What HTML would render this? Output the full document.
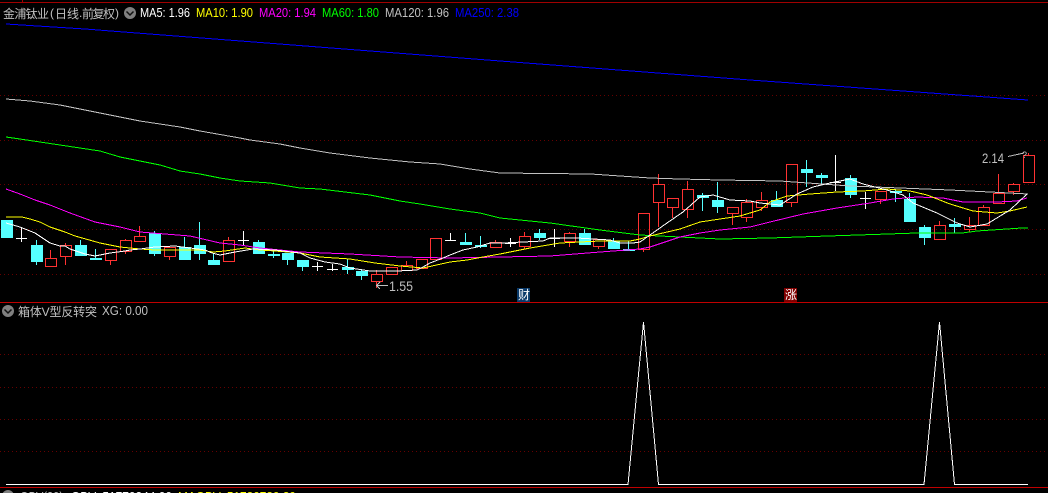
<!DOCTYPE html>
<html><head><meta charset="utf-8"><style>
html,body{margin:0;padding:0;background:#000;width:1048px;height:493px;overflow:hidden}
svg{display:block;position:absolute;left:0;top:0}
text{font-family:"Liberation Sans","Noto Sans CJK SC",sans-serif;font-size:13px}
.c{font-size:12px}
</style></head><body>
<svg width="1048" height="493" viewBox="0 0 1048 493">
<g shape-rendering="crispEdges" fill="none">
<path d="M0 2.500H1048M22.500 0V3" stroke="#a00000"/>
<path d="M0 95.500H1048M0 140.500H1048M0 184.500H1048M0 229.500H1048M0 274.500H1048M0 354.500H1048M0 387.500H1048M0 419.500H1048M0 451.500H1048" stroke="#660000" stroke-dasharray="1 3"/>
<path d="M0 302.500H1048M0 487.500H1048" stroke="#c00000"/>
<path fill="#55ffff" stroke="none" d="M1 220h12v18h-12zM31 245h12v17h-12zM75 245h12v11h-12zM90 258h12v2h-12zM149 233h12v21h-12zM179 247h12v13h-12zM194 245h12v9h-12zM208 260h12v5h-12zM253 242h12v12h-12zM268 254h12v2h-12zM282 253h12v7h-12zM297 260h12v7h-12zM342 267h12v3h-12zM356 271h12v5h-12zM460 242h12v3h-12zM475 245h12v2h-12zM534 233h12v5h-12zM579 233h12v12h-12zM608 241h12v8h-12zM623 249h12v2h-12zM697 195h12v3h-12zM712 200h12v7h-12zM771 200h12v7h-12zM801 169h12v4h-12zM816 175h12v3h-12zM845 178h12v17h-12zM890 191h12v2h-12zM904 199h12v23h-12zM919 227h12v11h-12zM949 224h12v3h-12z"/>
<path stroke="#55ffff" d="M36.500 240V265M80.500 240V245M95.500 249V260M154.500 231V256M184.500 237V247M199.500 222V260M213.500 254V260M258.500 240V254M273.500 250V258M287.500 253V265M302.500 260V271M347.500 259V274M361.500 269V280M465.500 233V245M480.500 236V248M539.500 229V240M584.500 229V245M613.500 238V249M628.500 241V251M702.500 193V211M717.500 182V213M776.500 191V207M806.500 160V187M821.500 173V185M850.500 175V198M895.500 189V202M909.500 193V222M924.500 225V245M954.500 218V233"/>
<path stroke="#ff3232" d="M45.500 258.500h11v8h-11zM50.500 250V258M60.500 245.500h11v11h-11zM65.500 243V245M65.500 257V265M105.500 249.500h11v11h-11zM110.500 261V265M120.500 240.500h11v11h-11zM125.500 239V240M125.500 252V254M134.500 236.500h11v5h-11zM139.500 226V236M164.500 247.500h11v9h-11zM169.500 257V260M223.500 240.500h11v21h-11zM228.500 237V240M371.500 274.500h11v7h-11zM376.500 270V274M376.500 282V288M386.500 267.500h11v7h-11zM401.500 265.500h11v5h-11zM406.500 261V265M416.500 259.500h11v9h-11zM430.500 238.500h11v21h-11zM490.500 242.500h11v5h-11zM495.500 240V242M519.500 236.500h11v10h-11zM524.500 232V236M524.500 247V249M564.500 233.500h11v8h-11zM569.500 232V233M569.500 242V247M593.500 239.500h11v7h-11zM598.500 247V249M638.500 213.500h11v36h-11zM643.500 250V252M653.500 184.500h11v18h-11zM658.500 174V184M658.500 203V227M667.500 198.500h11v9h-11zM672.500 208V218M682.500 189.500h11v20h-11zM687.500 181V189M687.500 210V218M727.500 207.500h11v6h-11zM732.500 214V225M741.500 202.500h11v15h-11zM746.500 199V202M746.500 218V222M756.500 200.500h11v7h-11zM761.500 192V200M761.500 208V211M786.500 164.500h11v38h-11zM791.500 203V207M875.500 191.500h11v8h-11zM880.500 200V204M934.500 225.500h11v14h-11zM939.500 221V225M964.500 225.500h11v4h-11zM969.500 217V225M969.500 230V232M978.500 207.500h11v18h-11zM983.500 205V207M993.500 193.500h11v10h-11zM998.500 174V193M1008.500 184.500h11v7h-11zM1013.500 183V184M1013.500 192V195M1023.500 155.500h11v27h-11zM1028.500 153V155"/>
<path stroke="#ffffff" d="M21.500 228V242M16 238.500H27M243.500 231V246M238 240.500H249M317.500 262V271M312 266.500H323M332.500 264V271M327 269.500H338M450.500 233V241M445 240.500H456M510.500 238V247M505 243.500H516M554.500 229V247M549 238.500H560M835.500 155V191M830 182.500H841M865.500 192V209M860 198.500H871"/>
<polyline stroke="#0000ff" points="6,24 85,29 500,61 750,80 1028,100"/>
<polyline stroke="#c0c0c0" points="6,99 30,101 60,105 100,113 140,121 180,127 200,131 240,138 250,140 280,144 300,148 330,153 370,158 410,162 440,164 470,169 500,173 591,174 620,176 650,178 680,179 720,180 780,181 850,186 900,188 950,190 990,192 1028,194"/>
<polyline stroke="#00ff00" points="6,137 20,139 40,142 60,145 80,148 100,151 120,157 140,161 160,165 180,171 200,174 220,178 240,181 270,183 300,188 320,189 345,192 370,195 400,201 420,204 450,209 480,213 500,218 550,223 600,230 640,235 680,237 720,239 770,238 828,236 858,235 888,234 917,233 962,233 977,231 992,230 1007,229 1022,228 1028,228"/>
<polyline stroke="#ff00ff" points="6,189 20,194 35,200 50,205 70,213 95,222 120,227 140,232 165,234 190,236 220,243 240,245 260,248 300,252 350,254 400,257 450,258 500,257 550,256 600,252 640,249 650,247 680,237 700,233 720,230 750,227 770,222 803,214 837,208 870,203 893,199 917,197 943,198 963,202 997,202 1017,201 1027,198"/>
<polyline stroke="#ffff00" points="6,217 22,217 30,219 40,222 50,227 65,232 75,236 100,243 120,247 140,249 155,250 180,250 200,250 213,252 225,251 245,248 260,250 275,251 300,253 320,257 350,259 375,263 400,266 423,268 450,262 467,260 483,257 500,254 530,248 560,243 600,241 630,241 640,239 650,236 680,229 700,222 720,219 740,216 760,210 770,202 787,196 810,194 837,192 863,191 887,189 910,191 927,195 950,204 973,211 997,213 1010,211 1027,207"/>
<polyline stroke="#ffffff" points="6,223 20,227 35,233 50,243 60,246 65,246 70,249 85,254 95,256 110,253 125,251 130,250 140,249 155,247 175,246 190,248 205,250 212,253 220,255 235,252 253,249 275,250 300,253 310,258 325,262 340,264 350,268 370,271 397,271 417,270 423,267 430,263 443,258 450,255 463,250 477,247 490,243 503,243 543,241 550,238 577,238 610,240 620,243 633,243 640,242 650,235 667,223 683,212 700,197 713,195 730,200 750,201 760,203 780,205 797,194 813,187 830,183 850,179 863,184 887,190 903,195 913,203 937,213 957,223 970,227 987,224 1010,210 1027,194"/>
<path stroke="#ffffff" d="M6 484.500H628L643.500 322L658.500 484.500H924L939.500 322L954.500 484.500H1028"/>
<path stroke="#c0c0c0" d="M376 285.500H388M376.500 285.500L380 282M376.500 285.500L380 289M1008 156.500L1024 153"/>
</g>
<rect x="517" y="288" width="13" height="14" fill="#0a3a6a"/>
<rect x="784" y="288" width="13" height="14" fill="#800000"/>
<text x="518" y="299" fill="#fff" class="c">财</text>
<text x="785" y="299" fill="#fff" class="c">涨</text>
<text x="1022" y="158" fill="#c0c0c0" style="font-size:9px">?</text>
<text x="389" y="291" fill="#c0c0c0" textLength="24" lengthAdjust="spacingAndGlyphs" style="font-size:14px">1.55</text>
<text x="982" y="163" fill="#c0c0c0" textLength="22" lengthAdjust="spacingAndGlyphs" style="font-size:14px">2.14</text>
<text x="3" y="18" fill="#c0c0c0" class="c" textLength="46">金浦钛业</text>
<text x="50" y="17" fill="#c0c0c0" class="c">(</text>
<text x="55" y="18" fill="#c0c0c0" class="c" textLength="24">日线</text>
<text x="79" y="17" fill="#c0c0c0" class="c">.</text>
<text x="82" y="18" fill="#c0c0c0" class="c" textLength="33">前复权</text>
<text x="115" y="17" fill="#c0c0c0" class="c">)</text>
<circle cx="130" cy="13" r="6" fill="#808080"/>
<path d="M126.500 11.500L130 15L133.500 11.500" fill="none" stroke="#111" stroke-width="1.500"/>
<text x="140" y="17" fill="#ffffff" textLength="50" lengthAdjust="spacingAndGlyphs">MA5: 1.96</text>
<text x="196" y="17" fill="#ffff00" textLength="57" lengthAdjust="spacingAndGlyphs">MA10: 1.90</text>
<text x="259" y="17" fill="#ff00ff" textLength="57" lengthAdjust="spacingAndGlyphs">MA20: 1.94</text>
<text x="322" y="17" fill="#00ff00" textLength="57" lengthAdjust="spacingAndGlyphs">MA60: 1.80</text>
<text x="385" y="17" fill="#c0c0c0" textLength="64" lengthAdjust="spacingAndGlyphs">MA120: 1.96</text>
<text x="455" y="17" fill="#0000ff" textLength="64" lengthAdjust="spacingAndGlyphs">MA250: 2.38</text>
<circle cx="8" cy="311" r="6" fill="#808080"/>
<path d="M4.500 309.500L8 313L11.500 309.500" fill="none" stroke="#111" stroke-width="1.500"/>
<text x="18" y="316" fill="#c0c0c0" class="c" textLength="79">箱体V型反转突</text>
<text x="102" y="315" fill="#c0c0c0" textLength="46" lengthAdjust="spacingAndGlyphs">XG: 0.00</text>
<circle cx="8" cy="496" r="6" fill="#808080"/>
<text x="20" y="501" fill="#c0c0c0" textLength="43" lengthAdjust="spacingAndGlyphs">OBV(30)</text>
<text x="71" y="501" fill="#ffffff" textLength="101" lengthAdjust="spacingAndGlyphs">OBV: 51770344.00</text>
<text x="178" y="501" fill="#ffff00" textLength="118" lengthAdjust="spacingAndGlyphs">MAOBV: 51780789.89</text>
</svg>
</body></html>
